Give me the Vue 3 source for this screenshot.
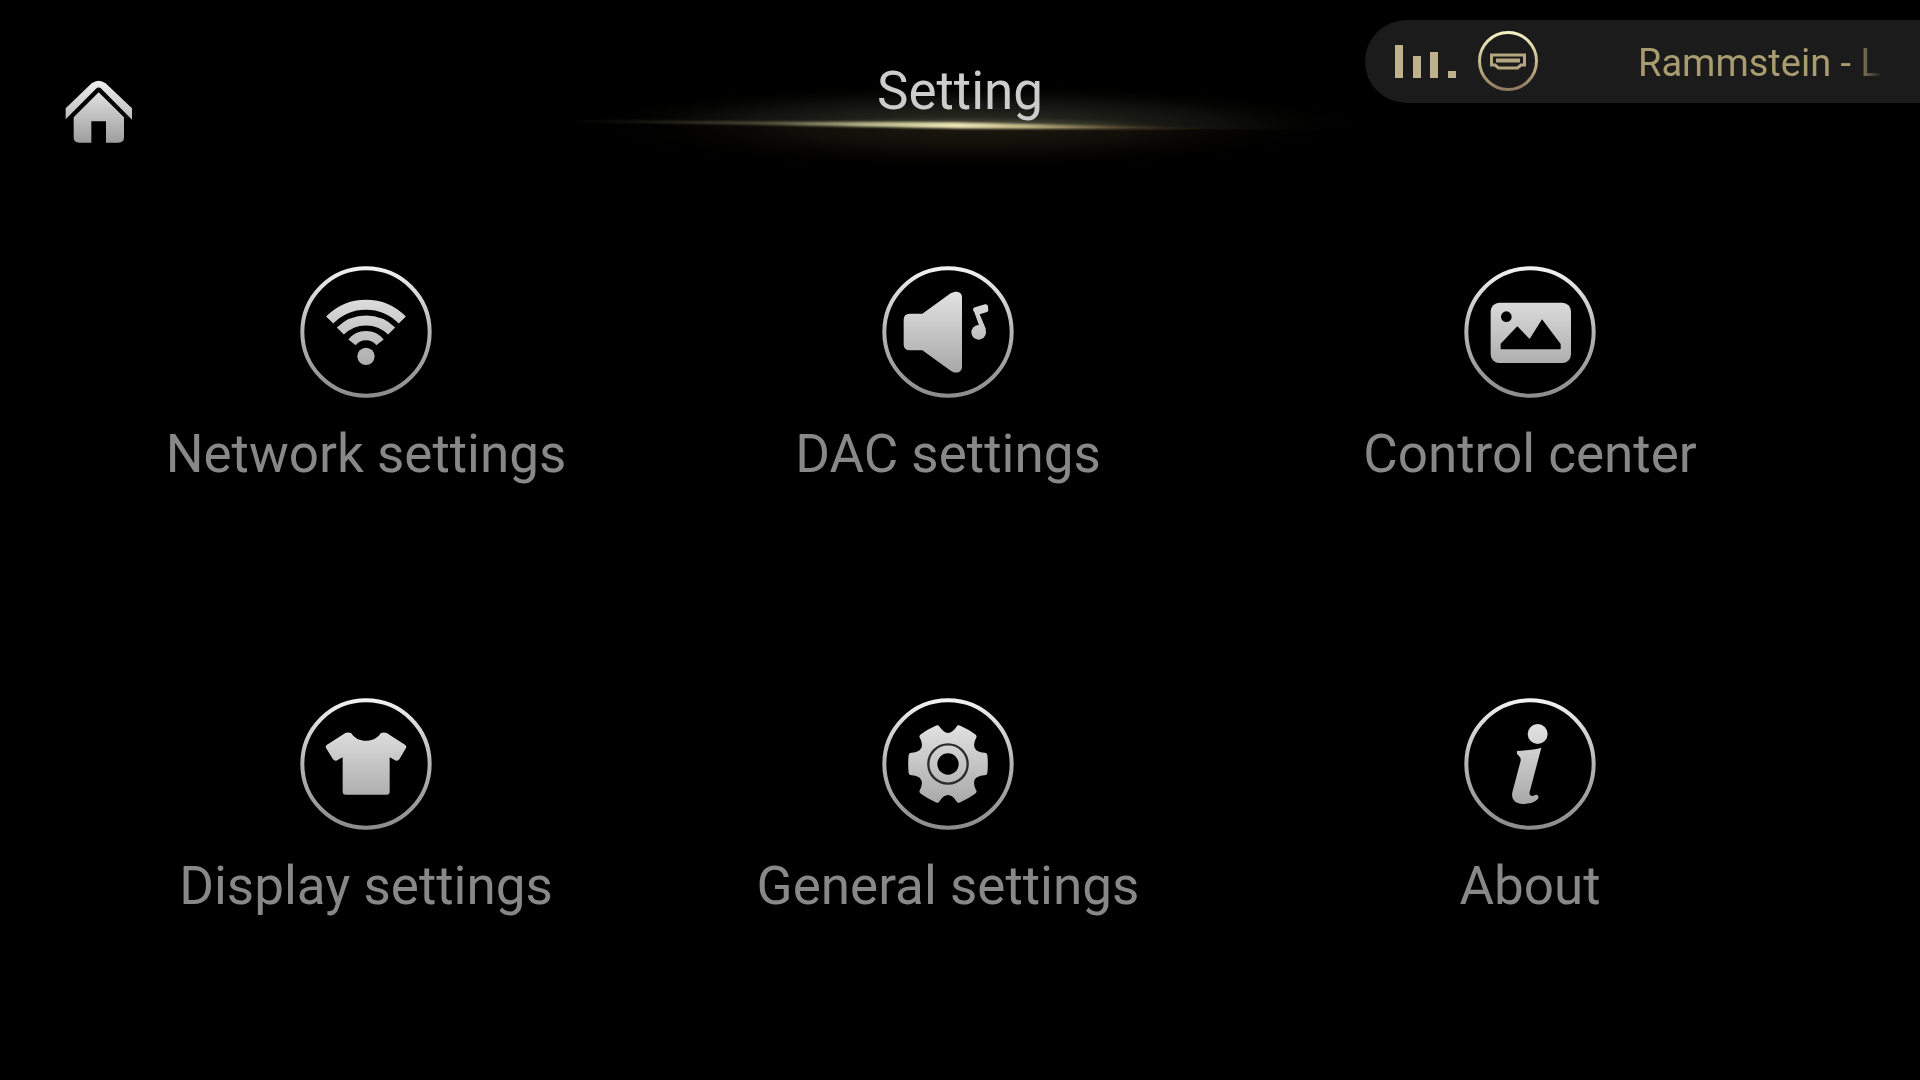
<script setup>
const tiles = [
  { id: 'network', label: 'Network settings' },
  { id: 'dac', label: 'DAC settings' },
  { id: 'control', label: 'Control center' },
  { id: 'display', label: 'Display settings' },
  { id: 'general', label: 'General settings' },
  { id: 'about', label: 'About' },
]

const bars = [33, 22, 26, 7]

// One tooth plus the notch after it, repeated around the centre six times
const tooth = [
  [110, -34], [117, -34], [118, -27], [121, 0], [118, 27], [117, 34], [110, 34],
  [80, 36], [71, 51], [84, 78],
]
function gearPath() {
  let d = ''
  for (let k = 0; k < 6; k++) {
    const a = (k * Math.PI) / 3
    const p = tooth.map(([x, y]) =>
      `${(x * Math.cos(a) - y * Math.sin(a)).toFixed(1)} ${(x * Math.sin(a) + y * Math.cos(a)).toFixed(1)}`)
    d += `${k ? 'L' : 'M'}${p[0]}Q${p[1]} ${p[2]}Q${p[3]} ${p[4]}Q${p[5]} ${p[6]}C${p[7]} ${p[8]} ${p[9]}`
  }
  return d + 'Z'
}
const gear = gearPath()
</script>

<template>
  <div class="screen">
    <svg class="defs" width="0" height="0" aria-hidden="true">
      <defs>
        <linearGradient id="ring" gradientUnits="userSpaceOnUse" x1="0" y1="-194" x2="0" y2="194">
          <stop offset="0" stop-color="#f2f2f2" />
          <stop offset="0.5" stop-color="#b4b4b4" />
          <stop offset="1" stop-color="#8c8c8c" />
        </linearGradient>
        <linearGradient id="metal" gradientUnits="userSpaceOnUse" x1="0" y1="-120" x2="0" y2="120">
          <stop offset="0" stop-color="#e2e2e2" />
          <stop offset="1" stop-color="#a8a8a8" />
        </linearGradient>
      </defs>
    </svg>

    <header class="top">
      <button class="home" type="button" aria-label="Home">
        <svg viewBox="0 0 204 192" width="68" height="64">
          <defs>
            <linearGradient id="homeFill" x1="0" y1="0" x2="0" y2="192" gradientUnits="userSpaceOnUse">
              <stop offset="0" stop-color="#f0f0f0" />
              <stop offset="1" stop-color="#9c9c9c" />
            </linearGradient>
          </defs>
          <path fill="url(#homeFill)" d="M2 85L80 10Q101-6 122 10L201 85V119L109 26Q101 19 93 26L2 118Z" />
          <path fill="url(#homeFill)" d="M101 37L177 112V172Q177 188 160 188H123V124H79V188H43Q26 188 26 172V112Z" />
        </svg>
      </button>

      <div class="heading">
        <svg class="glow" viewBox="0 0 840 130" width="840" height="130" aria-hidden="true">
          <defs>
            <radialGradient id="haloUp">
              <stop offset="0" stop-color="#30312a" />
              <stop offset="0.3" stop-color="#21221b" />
              <stop offset="0.65" stop-color="#0e0f0b" />
              <stop offset="1" stop-color="#000" stop-opacity="0" />
            </radialGradient>
            <radialGradient id="haloDown">
              <stop offset="0" stop-color="#1c1710" />
              <stop offset="0.45" stop-color="#110e09" />
              <stop offset="1" stop-color="#000" stop-opacity="0" />
            </radialGradient>
            <radialGradient id="core">
              <stop offset="0" stop-color="#8f8d66" stop-opacity="0.6" />
              <stop offset="1" stop-color="#6b6a4c" stop-opacity="0" />
            </radialGradient>
            <linearGradient id="beam" x1="20" y1="0" x2="670" y2="0" gradientUnits="userSpaceOnUse">
              <stop offset="0" stop-color="#6d6d50" stop-opacity="0" />
              <stop offset="0.3" stop-color="#82835f" stop-opacity="0.4" />
              <stop offset="0.47" stop-color="#b3b186" />
              <stop offset="0.61" stop-color="#efe9b8" />
              <stop offset="0.74" stop-color="#b5a677" />
              <stop offset="0.88" stop-color="#5c462c" stop-opacity="0.7" />
              <stop offset="1" stop-color="#4a3722" stop-opacity="0" />
            </linearGradient>
            <filter id="soft" x="-10%" y="-100%" width="120%" height="300%">
              <feGaussianBlur stdDeviation="4 1" />
            </filter>
            <clipPath id="upper"><path d="M0 0H840V81L420 77L0 71Z" /></clipPath>
            <clipPath id="lower"><path d="M0 71L420 77L840 81V130H0Z" /></clipPath>
          </defs>
          <ellipse cx="430" cy="77" rx="400" ry="44" fill="url(#haloUp)" clip-path="url(#upper)" />
          <ellipse cx="430" cy="77" rx="380" ry="44" fill="url(#haloDown)" clip-path="url(#lower)" />
          <ellipse cx="425" cy="76" rx="200" ry="9" fill="url(#core)" clip-path="url(#upper)" />
          <path d="M20 71L420 73L670 79L420 78Z" fill="url(#beam)" stroke="url(#beam)" stroke-width="1" filter="url(#soft)" />
        </svg>
        <h1>Setting</h1>
      </div>

      <button class="player" type="button" aria-label="Now playing">
        <span class="bars">
          <span v-for="(h, i) in bars" :key="i" class="bar" :style="{ height: h + 'px' }"></span>
        </span>
        <svg class="source" viewBox="0 0 60 60" width="60" height="60" aria-hidden="true">
          <defs>
            <linearGradient id="gold" x1="0" y1="0" x2="0" y2="60" gradientUnits="userSpaceOnUse">
              <stop offset="0" stop-color="#f6f1c4" />
              <stop offset="0.5" stop-color="#c4b78f" />
              <stop offset="1" stop-color="#8c745c" />
            </linearGradient>
          </defs>
          <circle cx="30" cy="29" r="28.5" fill="none" stroke="url(#gold)" stroke-width="3" />
          <path d="M13.5 23H46.5V33H43L39.5 36H20.5L17 33H13.5Z" fill="none" stroke="#b3a680" stroke-width="3" />
          <path d="M18 28.5H42" stroke="#b3a680" stroke-width="4" />
        </svg>
        <span class="track">Rammstein - L</span>
      </button>
    </header>

    <main class="grid">
      <button v-for="t in tiles" :key="t.id" class="tile" type="button">
        <svg viewBox="-198 -198 396 396" width="132" height="132" aria-hidden="true">
          <circle r="191" fill="none" stroke="url(#ring)" stroke-width="12" />
          <g v-if="t.id === 'network'" fill="none" stroke="url(#metal)">
            <path d="M-109-36A152 152 0 0 1 109-36" stroke-width="30" />
            <path d="M-77-3A109 109 0 0 1 77-3" stroke-width="30" />
            <path d="M-42 31A54 54 0 0 1 42 31" stroke-width="28" />
            <circle cy="73" r="26" fill="url(#metal)" stroke="none" />
          </g>
          <g v-else-if="t.id === 'dac'" fill="url(#metal)">
            <path d="M-133-37Q-133-55-115-55H-77L8-116C25-126 42-120 42-104V105C42 121 25 127 8 116L-77 55H-115Q-133 55-133 37Z" />
            <circle cx="92" cy="1" r="22" />
            <path d="M75-68Q75-73 81-74L111-83Q118-84 120-77L121-65Q121-61 115-59L95-53L114-8L102 0L93-20L79-59Q75-63 75-68Z" />
          </g>
          <g v-else-if="t.id === 'control'">
            <rect x="-118" y="-88" width="241" height="181" rx="26" fill="url(#metal)" />
            <circle cx="-71" cy="-46" r="16" />
            <path d="M-88 52V35L-38-17L-1 21L36-38L92 36V52Z" />
          </g>
          <path
            v-else-if="t.id === 'display'"
            fill="url(#metal)"
            d="M-62-93Q-52-96-44-92C-26-62 26-62 44-92Q52-96 62-93L117-58Q123-54 120-48L100-14Q97-9 90-10L71-20V83Q71 92 62 92H-61Q-70 92-70 83V-20L-89-10Q-96-9-99-14L-120-48Q-123-54-117-58Z"
          />
          <g v-else-if="t.id === 'general'">
            <path :d="gear" fill="url(#metal)" />
            <circle r="59" fill="none" stroke="#2c2c2c" stroke-width="7" />
            <circle r="32" />
          </g>
          <g v-else fill="url(#metal)">
            <circle cx="23" cy="-90" r="30" />
            <path d="M-39-39C-15-41 15-43 34-49L-1 84C-4 97 8 98 15 93Q27 90 25 103C15 117-5 120-20 120C-45 120-57 105-53 85L-28-10C-26-22-38-25-39-32Z" />
          </g>
        </svg>
        <span class="label">{{ t.label }}</span>
      </button>
    </main>
  </div>
</template>

<style>
body {
  margin: 0;
  background: #000;
}
</style>

<style scoped>
.screen {
  min-height: 100vh;
  background: #000;
  font-family: Roboto, "Noto Sans", sans-serif;
}
.defs {
  position: absolute;
}
button {
  margin: 0;
  padding: 0;
  border: 0;
  background: none;
  font: inherit;
  cursor: pointer;
}
svg {
  display: block;
}
.top {
  display: grid;
  grid-template-columns: 1fr auto 1fr;
  align-items: start;
  padding-top: 20px;
}
.home {
  justify-self: start;
  margin: 60px 0 0 65px;
}
.heading {
  position: relative;
  margin-top: 39px;
}
.glow {
  position: absolute;
  left: 50%;
  top: -9px;
  transform: translateX(-50%);
}
h1 {
  position: relative;
  margin: 0;
  color: #ccc;
  font-size: 53px;
  font-weight: 400;
  line-height: 64px;
}
.player {
  justify-self: end;
  display: flex;
  align-items: center;
  box-sizing: border-box;
  width: 555px;
  height: 83px;
  padding: 0 38px 0 30px;
  border-radius: 42px 0 0 42px;
  background: #1b1b1b;
}
.bars {
  display: flex;
  align-items: flex-end;
  justify-content: space-between;
  width: 61px;
  height: 33px;
}
.bar {
  width: 8px;
  background: #beb18b;
}
.source {
  margin-left: 22px;
  overflow: visible;
}
.track {
  flex: 1;
  overflow: hidden;
  padding: 2px 0 0 100px;
  color: #a89b6f;
  font-size: 38px;
  line-height: 48px;
  text-align: left;
  white-space: nowrap;
  -webkit-mask-image: linear-gradient(to left, transparent, #000 28px);
  mask-image: linear-gradient(to left, transparent, #000 28px);
}
.grid {
  display: grid;
  grid-template-columns: repeat(3, 1fr);
  row-gap: 212px;
  padding: 122px 99px 94px 75px;
}
.tile {
  display: flex;
  flex-direction: column;
  align-items: center;
  gap: 24px;
}
.label {
  color: #888;
  font-size: 53px;
  line-height: 64px;
  white-space: nowrap;
}
</style>
